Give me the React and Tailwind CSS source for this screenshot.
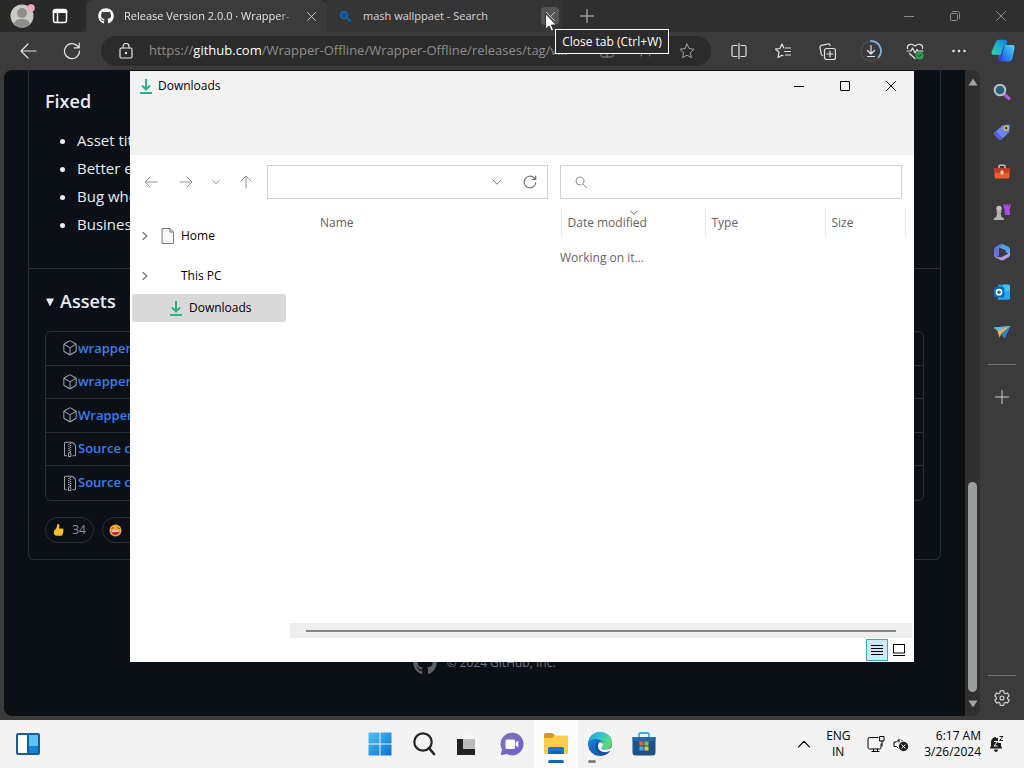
import { useState } from 'react';
import { GoPackage, GoFileZip } from 'react-icons/go';
import { FaGithub } from 'react-icons/fa';

const Icon = ({ size = 16, box = 16, width = 1, className = '', children }) => (
  <svg
    width={size}
    height={size}
    viewBox={`0 0 ${box} ${box}`}
    fill="none"
    stroke="currentColor"
    strokeWidth={width}
    strokeLinecap="round"
    strokeLinejoin="round"
    className={`shrink-0 ${className}`}
    aria-hidden="true"
  >
    {children}
  </svg>
);

const CloseIcon = ({ size = 10 }) => (
  <Icon size={size} box={10}><path d="M.5.5l9 9M9.5.5l-9 9" /></Icon>
);

const PlusIcon = () => (
  <Icon size={14} box={14}><path d="M7 .5v13M.5 7h13" /></Icon>
);

const DownloadsIcon = () => (
  <Icon size={16} width={2} className="text-[#2bb08a]">
    <path d="M8 1v10M4 7.500l4 4 4-4" strokeLinecap="butt" />
    <path d="M2 15h12" strokeLinecap="butt" />
  </Icon>
);

const Cursor = () => (
  <svg width="12" height="19" viewBox="0 0 12 19" className="absolute left-[4px] top-[6px] z-30" aria-hidden="true">
    <path d="M.6.8v15.400l3.500-3.300 2.300 5.300 2.300-1-2.300-5.200h4.900z" fill="#fff" stroke="#222" strokeWidth=".9" />
  </svg>
);

const TabStrip = () => {
  const [activeTab, setActiveTab] = useState('release');

  return (
    <div className="flex h-8 shrink-0 bg-[#2f2f2f]">
      <div className="flex w-[86px] shrink-0 items-center rounded-br-lg bg-[#292929]">
        <button aria-label="Profile" className="ml-[10px]">
          <svg width="26" height="26" viewBox="0 0 26 26">
            <circle cx="12" cy="13" r="11.500" fill="#c9c9c5" />
            <circle cx="12" cy="10" r="5" fill="#8d8d89" />
            <path d="M4 21c1-4 4-5 8-5s7 1 8 5a11.500 11.500 0 0 1-16 0z" fill="#8d8d89" />
            <circle cx="21" cy="5" r="3.800" fill="#f2a9b8" />
          </svg>
        </button>
        <button aria-label="Tab actions" className="ml-4 text-white">
          <Icon size={16} width={1.500}>
            <rect x="1.500" y="1.500" width="13" height="13" rx="2" />
            <path d="M2 3.500h12" strokeWidth="3" />
            <path d="M5.500 4v10" />
          </Icon>
        </button>
      </div>

      <div className="flex w-[241px] shrink-0 items-center rounded-t-lg bg-[#3b3b3b] pl-3">
        <FaGithub className="shrink-0 text-white" size={16} />
        <button
          onClick={() => setActiveTab('release')}
          aria-pressed={activeTab === 'release'}
          className="ml-[10px] w-[172px] shrink-0 whitespace-nowrap mask-r-from-90% text-left text-[11px] text-[#e4e4e4]"
        >
          Release Version 2.0.0 · Wrapper-
        </button>
        <button aria-label="Close tab" className="ml-[11px] text-[#d0d0d0]"><CloseIcon size={9} /></button>
      </div>

      <div className="flex w-[236px] shrink-0 items-center bg-[#353535] pl-3">
        <Icon size={12} box={12} width={2} className="text-[#1464ac]">
          <circle cx="5" cy="5" r="3.300" fill="#0d4f8c" />
          <path d="M7.500 7.500L11 11" />
        </Icon>
        <button
          onClick={() => setActiveTab('search')}
          aria-pressed={activeTab === 'search'}
          className="ml-3 flex-1 text-left text-[11px] text-[#d6d6d6]"
        >
          mash wallppaet - Search
        </button>
        <div className="relative mr-1 size-[18px]">
          <button aria-label="Close tab" className="flex size-[18px] items-center justify-center rounded bg-[#555] text-[#ccc]">
            <CloseIcon size={9} />
          </button>
          <Cursor />
          <div role="tooltip" className="absolute left-[14px] top-[22px] z-20 flex h-[25px] w-[114px] items-center justify-center whitespace-nowrap border border-white bg-[#2b2b2b] text-xs text-white">
            Close tab (Ctrl+W)
          </div>
        </div>
      </div>

      <button aria-label="New tab" className="ml-[17px] text-[#c8c8c8]"><PlusIcon /></button>

      <div className="ml-auto flex text-[#8e8e8e]">
        <button aria-label="Minimize" className="flex w-[46px] items-center justify-center">
          <Icon size={10} box={10}><path d="M0 5.500h10" /></Icon>
        </button>
        <button aria-label="Restore" className="flex w-[46px] items-center justify-center">
          <Icon size={10} box={10}>
            <rect x=".5" y="2.500" width="7" height="7" rx="1" />
            <path d="M2.500.5h5a2 2 0 0 1 2 2v5" />
          </Icon>
        </button>
        <button aria-label="Close" className="flex w-[46px] items-center justify-center"><CloseIcon /></button>
      </div>
    </div>
  );
};

const ToolButton = ({ label, children }) => (
  <button aria-label={label} className="flex h-[38px] w-11 shrink-0 items-center justify-center text-[#e4e4e4]">
    {children}
  </button>
);

const Star = () => <path d="M8 1l2.100 4.600 5 .6-3.700 3.400 1 5L8 12.200l-4.400 2.400 1-5L.9 6.200l5-.6z" />;

const Toolbar = () => (
  <div className="flex h-[38px] shrink-0 items-center bg-[#3b3b3b] pl-[6px]">
    <ToolButton label="Back">
      <Icon size={18} box={18} width={1.200}><path d="M17 9H2M9 2L2 9l7 7" /></Icon>
    </ToolButton>
    <ToolButton label="Refresh">
      <Icon size={18} box={18} width={1.200}><path d="M16.500 9a7.500 7.500 0 1 1-2.500-5.500l2 2M16.200 1v4.800h-4.800" /></Icon>
    </ToolButton>
    <div className="ml-[7px] flex h-[30px] min-w-0 flex-1 items-center rounded-full bg-[#2b2b2b] pl-[17px]">
      <Icon size={16} width={1.200} className="text-[#e4e4e4]">
        <rect x="2" y="5" width="12" height="10" rx="1.500" />
        <path d="M5 5V3.500a3 3 0 0 1 6 0V5" />
        <circle cx="8" cy="10" r=".6" fill="currentColor" />
      </Icon>
      <a
        href="https://github.com/Wrapper-Offline/Wrapper-Offline/releases"
        className="ml-[15px] flex-1 overflow-hidden whitespace-nowrap text-[13px] text-[#8f8f8f]"
      >
        https://<span className="text-white">github.com</span>/Wrapper-Offline/Wrapper-Offline/releases/tag/v...
      </a>
      <button aria-label="Install app" className="flex w-10 justify-center text-[#8c8c8c]">
        <Icon size={14} box={14}>
          <path d="M1 7h12v4.500a1.500 1.500 0 0 1-1.500 1.500h-9A1.500 1.500 0 0 1 1 11.500zM1 7V2.500A1.500 1.500 0 0 1 2.500 1H7v12M10.500 1v4M8.500 3h4" />
        </Icon>
      </button>
      <button aria-label="Read aloud" className="flex w-10 justify-center text-[#8c8c8c]">
        <Icon size={16}><path d="M2 13L6.500 2 11 13M3.500 9.500h6M12 3c1.300 1.500 1.300 3.500 0 5M14 1.500c2 2.500 2 5.500 0 8" /></Icon>
      </button>
      <button aria-label="Add to favorites" className="mr-1 flex w-10 justify-center text-[#a0a0a0]">
        <Icon size={16}><Star /></Icon>
      </button>
    </div>
    <div className="ml-[6px] flex">
      <ToolButton label="Split screen">
        <Icon size={16} width={1.200}>
          <path d="M6 2.500H2.500a1.500 1.500 0 0 0-1.500 1.500v8a1.500 1.500 0 0 0 1.500 1.500H6M10 2.500h3.500A1.500 1.500 0 0 1 15 4v8a1.500 1.500 0 0 1-1.500 1.500H10M8 .6v14.800" />
        </Icon>
      </ToolButton>
      <ToolButton label="Favorites">
        <Icon size={16} width={1.200}>
          <path d="M8.800 5L7 1 5 5.500l-4.500.6L4 9.300 3 14.500l4-2.300 1 .5M10.500 5H16M9.500 8.500H16M10.500 12H16" />
        </Icon>
      </ToolButton>
      <ToolButton label="Collections">
        <Icon size={17} box={17} width={1.200}>
          <rect x="5.500" y="5.500" width="11" height="11" rx="2" />
          <path d="M11 8v6M8 11h6M3.500 12.500A2 2 0 0 1 2.200 11L1 4.500a2 2 0 0 1 1.500-2.200L9 1a2 2 0 0 1 2.200 1.500" />
        </Icon>
      </ToolButton>
      <ToolButton label="Downloads">
        <Icon size={22} box={22} width={1.200}>
          <circle cx="11" cy="11" r="10" stroke="#4a4c4e" strokeWidth="1.500" />
          <path d="M11 1a10 10 0 0 1 7.500 16.500" stroke="#7fb0dd" strokeWidth="1.800" />
          <path d="M11 5.500v8M7.500 10.500L11 14l3.500-3.500M7.500 16.500h7" />
        </Icon>
      </ToolButton>
      <ToolButton label="Browser essentials">
        <Icon size={18} box={18} width={1.200}>
          <path d="M1.500 6.500C.5 3 5 .5 9 4c4-3.500 8.500-1 7.500 2.500M1 9h4l1.500-3 2.500 5 2-3.500 1 1.500h5M3.500 11.500L9 16.500" />
          <circle cx="13.500" cy="13.500" r="4" fill="#2f9e4b" stroke="none" />
          <path d="M11.800 13.500l1.200 1.200 2.200-2.300" stroke="#163b1f" strokeWidth="1" />
        </Icon>
      </ToolButton>
      <ToolButton label="Settings and more">
        <Icon size={14} box={14}>
          <g fill="currentColor" stroke="none">
            <circle cx="1.500" cy="7" r="1.300" /><circle cx="7" cy="7" r="1.300" /><circle cx="12.500" cy="7" r="1.300" />
          </g>
        </Icon>
      </ToolButton>
      <button aria-label="Copilot" className="flex w-[43px] items-center justify-center">
        <svg width="24" height="24" viewBox="0 0 24 24">
          <defs>
            <linearGradient id="copA" x1="0" y1="1" x2="1" y2="0">
              <stop offset="0" stopColor="#35d39a" /><stop offset=".5" stopColor="#18b3cf" /><stop offset="1" stopColor="#1479e0" />
            </linearGradient>
            <linearGradient id="copB" x1="0" y1="1" x2="1" y2="0">
              <stop offset="0" stopColor="#2e46e6" /><stop offset=".5" stopColor="#2c95f5" /><stop offset="1" stopColor="#62d3fa" />
            </linearGradient>
          </defs>
          <path d="M5 2.500Q6 .8 8 .8h6.500q2 0 1.500 2.500l-2.500 9.500q-.8 3-3.500 3H2.500Q0 15.800.7 12.500z" fill="url(#copA)" />
          <path d="M14 6h7.500q2.500 0 2 3l-2 10.500q-.8 3-3.500 3h-7q-2.500 0-1.800-3l1.800-10q.8-3.500 3-3.500z" fill="url(#copB)" />
          <path d="M13.200 6.500L10.300 18" stroke="#2b3440" strokeWidth=".8" />
          <path d="M7 16h4.500l-1.300 6.500Q7.500 22 7 16z" fill="#3a42e0" />
        </svg>
      </button>
    </div>
  </div>
);

const fixes = ['Asset titles', 'Better errors', 'Bug where', 'Businesses'];

const assets = [
  { name: 'wrapper-offline', icon: GoPackage },
  { name: 'wrapper-offline', icon: GoPackage },
  { name: 'Wrapper-Offline', icon: GoPackage },
  { name: 'Source code', icon: GoFileZip },
  { name: 'Source code', icon: GoFileZip },
];

const ReleasePage = () => (
  <main className="min-w-0 flex-1 overflow-hidden rounded-l-lg bg-[#0b0f16] text-[#e6edf3]">
    <div className="mx-6 rounded-b-md border border-t-0 border-[#2a3037]">
      <div className="px-4 pt-4 pb-8">
        <h3 className="text-lg leading-[30px] font-semibold">Fixed</h3>
        <ul className="mt-3 list-disc space-y-1 pl-8 text-[15px] leading-6">
          {fixes.map(item => <li key={item}>{item}</li>)}
        </ul>
      </div>
      <div className="border-t border-[#2a3037] px-4 pt-[17px] pb-4">
        <h3 className="flex items-center gap-[5px] text-lg leading-[30px] font-semibold">
          <svg width="10" height="12" viewBox="0 0 10 12" aria-hidden="true"><path d="M1 3.500h8L5 11.500z" fill="currentColor" /></svg>
          Assets
        </h3>
        <ul className="mt-[15px] grid h-[170px] auto-rows-fr divide-y divide-[#2a3037] rounded-md border border-[#2a3037]">
          {assets.map(({ name, icon: AssetIcon }, i) => (
            <li key={i} className="flex items-center pl-4 text-[13px] font-semibold">
              <AssetIcon size={16} className="shrink-0 text-[#9aa3ad]" />
              <a href="#" className="text-[#3b7eea]">{name}</a>
            </li>
          ))}
        </ul>
        <div className="mt-4 flex gap-2 text-xs text-[#8b949e]">
          <button aria-label="Thumbs up, 34" className="flex h-[26px] w-[49px] items-center justify-center gap-2 rounded-full border border-[#2a3037]">
            <svg width="11" height="14" viewBox="0 0 11 14" aria-hidden="true">
              <path d="M4.500 1.200c1-.8 2 .2 1.900 1.500L6 5.500h3.300c1.400 0 1.500 1.500.8 2 .7.600.5 1.600-.2 1.900.4.700.2 1.500-.5 1.800.1 1-.5 1.600-1.400 1.600H4C2 12.800.8 11.500.8 9.500.8 7 2.800 6.300 3.600 4.500c.4-1 .3-2.300.9-3.300z" fill="#fbc02e" />
            </svg>
            34
          </button>
          <button aria-label="Laugh" className="flex h-[26px] w-[49px] items-center rounded-full border border-[#2a3037] pl-[6px]">
            <svg width="13" height="13" viewBox="0 0 13 13" aria-hidden="true">
              <circle cx="6.500" cy="6.500" r="6" fill="#f7a53c" />
              <path d="M2.500 4.500l2-.8M8.500 3.700l2 .8" stroke="#5c3514" />
              <path d="M2.500 6.500h8c0 3-1.800 4.500-4 4.500s-4-1.500-4-4.500z" fill="#c2263c" />
              <path d="M3 6.500h7v1.200H3z" fill="#fff" />
            </svg>
          </button>
        </div>
      </div>
    </div>
    <footer className="mt-[91px] flex items-center justify-center gap-[9px] text-xs text-[#6e7681]">
      <FaGithub size={24} className="text-[#59616b]" />
      © 2024 GitHub, Inc.
    </footer>
  </main>
);

const PageScrollbar = () => (
  <div className="flex w-[15px] shrink-0 flex-col items-center rounded-r-lg bg-[#2f302f] py-2 text-[#a3a3a3]">
    <svg width="10" height="8" viewBox="0 0 10 8" aria-hidden="true"><path d="M5 .5L9.500 7.500h-9z" fill="currentColor" /></svg>
    <div className="flex w-full flex-1 flex-col items-center pt-1 pb-2">
      <div className="flex-[393]" />
      <div className="w-[9px] flex-[210] rounded-full bg-[#9b9e9c]" />
    </div>
    <svg width="10" height="8" viewBox="0 0 10 8" aria-hidden="true"><path d="M5 7.500L9.500.5h-9z" fill="currentColor" /></svg>
  </div>
);

const SideButton = ({ label, children }) => (
  <button aria-label={label} className="flex h-10 w-full items-center justify-center">
    <svg width="18" height="18" viewBox="0 0 18 18">{children}</svg>
  </button>
);

const EdgeSidebar = () => (
  <aside className="flex w-11 shrink-0 flex-col items-center pt-[2px] text-[#cfcfcf]">
    <SideButton label="Search">
      <path d="M10.500 10.500l5.500 5" stroke="#b35be0" strokeWidth="3.200" strokeLinecap="round" />
      <circle cx="7" cy="7" r="5.300" fill="#25617c" stroke="#b9c1c4" strokeWidth="2" />
    </SideButton>
    <SideButton label="Shopping">
      <path d="M9.500 2.500L15.500 1.500q1.500 0 1.500 1.500l-.8 6L8.500 16.500q-1.200 1-2.400 0L1.500 12q-1-1.200 0-2.400z" fill="#6f86f2" />
      <path d="M1.500 12q-1-1.200 0-2.400L3 8.500l7 6.500-1.500 1.500q-1.200 1-2.400 0z" fill="#5a5fd8" />
      <circle cx="13.200" cy="5.200" r="2" fill="#32406b" stroke="#e6c53c" strokeWidth="1.300" />
    </SideButton>
    <SideButton label="Tools">
      <path d="M6 5V3.200q0-1 1-1h4q1 0 1 1V5" fill="none" stroke="#b9b9b9" strokeWidth="1.600" />
      <path d="M.8 6q0-1 1-1h14.400q1 0 1 1v3.500H.8z" fill="#c53a26" />
      <path d="M1.500 9.500h15V14q0 1.500-1.500 1.500H3q-1.500 0-1.500-1.500z" fill="#ee5a33" />
      <rect x="7.500" y="7.500" width="3" height="4" rx="1" fill="#f3c9a5" />
    </SideButton>
    <SideButton label="Games">
      <path d="M10.500 1h1.500v1.500h1.200V1h1.600v1.500H16V1h1.500v3.500l-1 1L17 12h-5l-.5-6.500-1-1z" fill="#a94be6" />
      <circle cx="6" cy="5.500" r="2.700" fill="#c1c1be" />
      <path d="M3.500 7.800h5v1.500l-.8.5.8 4 2.500 1.700V17H.8v-1.500l2.500-1.700.9-4-.7-.5z" fill="#b0b0ad" />
    </SideButton>
    <SideButton label="Microsoft 365">
      <path d="M9.500 1l6 3q1.500.8 1.500 2.500v5L12.500 9V7L6 4.500z" fill="#4da6f3" />
      <path d="M9.500 1Q7 .5 5.500 2L2.500 4Q1 5 1 7v6q2.500 1 5-.5V6q0-2 2-3z" fill="#6672dd" />
      <path d="M1 12q.3 1.500 1.500 2.300l5 2.700q1.500.8 3 0L16 14q1-.8 1-2.500V9.500L9.500 13.800Q5 15.500 1 12z" fill="#b69bea" />
    </SideButton>
    <SideButton label="Outlook">
      <path d="M5 1.500h10q2 0 2 2V15q0 1.500-1.500 1.500H5z" fill="#1d8fe0" />
      <path d="M10 1.500h5q2 0 2 2V8l-7 2z" fill="#47bdf2" />
      <path d="M5 10l12-2v7q0 1.500-1.500 1.500H5z" fill="#27a9ee" />
      <rect x=".8" y="4" width="10.500" height="10.500" rx="1.500" fill="#0768b8" />
      <circle cx="6" cy="9.200" r="2.600" fill="none" stroke="#fff" strokeWidth="1.600" />
    </SideButton>
    <SideButton label="Drop">
      <path d="M.5 4.500L17.500 3 11.500 15.500 8 10.500z" fill="#3c9be8" />
      <path d="M.5 4.500L17.500 3 5.500 8.500z" fill="#62b6ef" />
      <path d="M4.500 8.300L17.500 3 8.500 10.500 6.500 14.500z" fill="#e8b542" />
      <path d="M8.500 10.500L17.500 3 11.500 15.500z" fill="#2a80cf" />
    </SideButton>
    <div className="mt-3 h-px w-7 bg-[#707070]" />
    <button aria-label="Customize sidebar" className="mt-[25px]"><PlusIcon /></button>
    <div className="mt-auto h-px w-7 bg-[#707070]" />
    <button aria-label="Settings" className="mt-[13px] mb-[13px]">
      <Icon size={18} box={24} width={1.600}>
        <path d="M9.700 2.500a10 10 0 0 1 4.600 0l.5 2.700 1.800 1 2.600-.9a10 10 0 0 1 2.300 4L19.400 11.200v1.700l2.100 1.800a10 10 0 0 1-2.300 4l-2.600-.9-1.800 1-.5 2.700a10 10 0 0 1-4.600 0l-.5-2.700-1.800-1-2.600.9a10 10 0 0 1-2.300-4l2.100-1.800v-1.700L2.500 9.300a10 10 0 0 1 2.300-4l2.600.9 1.800-1z" />
        <circle cx="12" cy="12" r="2.600" />
      </Icon>
    </button>
  </aside>
);

const ExplorerWindow = () => {
  const [path, setPath] = useState('');
  const [query, setQuery] = useState('');

  return (
    <section className="absolute top-[71px] right-[110px] bottom-[58px] left-[130px] z-10 flex flex-col bg-white text-xs text-black">
      <header className="h-[84px] shrink-0 bg-[#f2f2f2]">
        <div className="flex h-[29px] items-center pl-2">
          <DownloadsIcon />
          <h1 className="ml-1">Downloads</h1>
          <div className="ml-auto flex">
            <button aria-label="Minimize" className="flex h-[29px] w-[46px] items-center justify-center">
              <Icon size={10} box={10}><path d="M0 5.500h10" /></Icon>
            </button>
            <button aria-label="Maximize" className="flex h-[29px] w-[46px] items-center justify-center">
              <Icon size={10} box={10}><rect x=".5" y=".5" width="9" height="9" rx=".5" /></Icon>
            </button>
            <button aria-label="Close" className="flex h-[29px] w-[46px] items-center justify-center"><CloseIcon /></button>
          </div>
        </div>
      </header>

      <nav className="flex shrink-0 items-center pt-[10px] pr-3 pl-[14px] text-[#8f8f8f]">
        <button aria-label="Back"><Icon size={14} box={14}><path d="M13 7H1.500M6 2L1 7l5 5" /></Icon></button>
        <button aria-label="Forward" className="ml-[21px]"><Icon size={14} box={14}><path d="M1 7h11.500M8 2l5 5-5 5" /></Icon></button>
        <button aria-label="Recent locations" className="ml-[19px]"><Icon size={8} box={8}><path d="M.7 2.500L4 5.800l3.300-3.300" /></Icon></button>
        <button aria-label="Up" className="ml-[19px]"><Icon size={14} box={14}><path d="M7 13V1.500M2 6l5-5 5 5" /></Icon></button>
        <div className="ml-[14px] flex h-[34px] w-[281px] items-center border border-[#d0d0d0]">
          <input aria-label="Address" value={path} onChange={e => setPath(e.target.value)} className="min-w-0 flex-1 px-2 outline-none" />
          <button aria-label="Previous locations" className="text-[#707070]"><Icon size={10} box={10}><path d="M.8 3L5 7.200 9.200 3" /></Icon></button>
          <button aria-label="Refresh" className="mr-[10px] ml-[21px] text-[#707070]">
            <Icon size={14} box={14} width={1.200}><path d="M12.800 7.500A5.800 5.800 0 1 1 11 2.800l1.500 1.400M12.700 1v3.500H9.200" /></Icon>
          </button>
        </div>
        <label className="ml-3 flex h-[34px] flex-1 items-center border border-[#d0d0d0] pl-[14px]">
          <Icon size={12} box={12}><circle cx="5" cy="5" r="4" /><path d="M8 8l3.500 3.500" /></Icon>
          <input aria-label="Search Downloads" value={query} onChange={e => setQuery(e.target.value)} className="min-w-0 flex-1 px-2 outline-none" />
        </label>
      </nav>

      <div className="flex min-h-0 flex-1">
        <ul className="w-40 shrink-0 pt-[23px] pr-1 pl-[2px]">
          <li className="flex h-7 items-center pl-[9px]">
            <Icon size={8} box={8} width={1.200} className="text-[#777]"><path d="M2 .5L5.800 4 2 7.500" /></Icon>
            <Icon size={16} className="ml-[11px] text-[#777]">
              <path d="M2.500.5h7.500l3.500 3.500v11.500h-11zM10 .5V4h3.500" fill="#fafafa" />
            </Icon>
            <a href="#" className="ml-[5px]">Home</a>
          </li>
          <li className="mt-3 flex h-7 items-center pl-[9px]">
            <Icon size={8} box={8} width={1.200} className="text-[#777]"><path d="M2 .5L5.800 4 2 7.500" /></Icon>
            <a href="#" className="ml-8">This PC</a>
          </li>
          <li className="mt-1 flex h-7 items-center rounded-xs bg-[#d9d9d9] pl-9">
            <DownloadsIcon />
            <a href="#" className="ml-[5px]">Downloads</a>
          </li>
        </ul>

        <div className="flex min-w-0 flex-1 flex-col">
          <div className="flex-1 pt-[10px]">
            <table className="w-full table-fixed text-left text-[#646464]">
              <thead>
                <tr className="h-7 divide-x divide-[#e6e6e6]">
                  <th className="pl-[30px] font-normal">Name</th>
                  <th className="relative w-36 pl-[6px] font-normal">
                    <Icon size={8} box={8} className="absolute left-[68px] top-0"><path d="M.7 2L4 5.300 7.300 2" /></Icon>
                    Date modified
                  </th>
                  <th className="w-[120px] pl-[6px] font-normal">Type</th>
                  <th className="w-20 pl-[6px] font-normal">Size</th>
                  <th className="w-[9px]" />
                </tr>
              </thead>
              <tbody>
                <tr className="h-[42px]">
                  <td colSpan={5} className="text-center">Working on it...</td>
                </tr>
              </tbody>
            </table>
          </div>
          <div className="mr-[2px] flex h-[15px] items-center bg-[#eeeeee] px-4">
            <div className="h-[2px] flex-1 bg-[#858585]" />
          </div>
        </div>
      </div>

      <div className="flex h-6 shrink-0 items-center justify-end pr-[9px]">
        <button aria-label="Details view" className="flex size-[22px] items-center justify-center border border-[#4a9cc4] bg-[#cfe8f5]">
          <Icon size={12} box={12} className="text-black"><path d="M0 1.500h12M0 4.500h12M0 7.500h12M0 10.500h12" /></Icon>
        </button>
        <button aria-label="Large icons view" className="ml-[5px]">
          <Icon size={12} box={12}><rect x=".5" y=".5" width="11" height="8.500" strokeLinejoin="miter" /><path d="M0 11.500h12" /></Icon>
        </button>
      </div>
    </section>
  );
};

const TaskButton = ({ label, children }) => (
  <button aria-label={label} className="flex h-full w-11 items-center justify-center">
    <svg width="24" height="24" viewBox="0 0 24 24">{children}</svg>
  </button>
);

const Taskbar = () => (
  <footer className="grid h-12 shrink-0 grid-cols-[1fr_auto_1fr] items-center bg-[#f3f3f3] text-black">
    <button aria-label="Widgets" className="ml-4 w-6">
      <svg width="24" height="24" viewBox="0 0 24 24">
        <rect x="1" y="2" width="22" height="20" rx="1" fill="#fff" stroke="#1d5c92" strokeWidth="2" />
        <rect x="13" y="3" width="9" height="18" fill="#5fc3f5" />
        <path d="M13 14h9v7h-9z" fill="#1683d8" />
        <path d="M12 2v20" stroke="#1d5c92" strokeWidth="2" />
      </svg>
    </button>
    <div className="flex h-12">
      <TaskButton label="Start">
        <defs>
          <linearGradient id="win" x1="0" y1="0" x2="1" y2="1"><stop offset="0" stopColor="#4cc5f5" /><stop offset="1" stopColor="#0a6fce" /></linearGradient>
        </defs>
        <path d="M.5.5h11v11H.5zM12.500.5h11v11h-11zM.5 12.500h11v11H.5zM12.500 12.500h11v11h-11z" fill="url(#win)" />
      </TaskButton>
      <TaskButton label="Search">
        <circle cx="11" cy="10" r="8.700" fill="none" stroke="#242424" strokeWidth="2.200" />
        <path d="M17 16l5 6" stroke="#242424" strokeWidth="2.600" strokeLinecap="round" />
      </TaskButton>
      <TaskButton label="Task view">
        <path d="M1 7h18v16H1z" fill="#222" />
        <path d="M7 3h16v14H7z" fill="#f7f7f7" />
        <path d="M7 7h12v10H7z" fill="#bcbcbc" />
      </TaskButton>
      <TaskButton label="Chat">
        <path d="M12 .8A11.300 11.300 0 1 1 6.800 22L.8 23.200 2 17.500A11.300 11.300 0 0 1 12 .8z" fill="#7265c5" />
        <path d="M12 .8a11.300 11.300 0 0 1 9 5L3 20 .8 23.200 2 17.500A11.300 11.300 0 0 1 12 .8z" fill="#8775bd" opacity=".5" />
        <rect x="5.500" y="7.500" width="9.500" height="9.500" rx="1.500" fill="#fff" />
        <path d="M15.500 10.800l2.800-2.300v7l-2.800-2.300z" fill="#fff" />
      </TaskButton>
      <div className="relative h-full bg-[#fcfcfc]">
        <TaskButton label="File Explorer">
          <path d="M0 2.500Q0 1 1.500 1h7L11 3.500 9 7H0z" fill="#d59a1c" />
          <path d="M0 6h8l3-2.500h11.500Q24 3.500 24 5v15.500q0 1.500-1.500 1.500h-21Q0 22 0 20.500z" fill="#fbcd4b" />
          <path d="M4 22v-5.500Q4 15 5.500 15h13q1.500 0 1.500 1.500V22z" fill="#1976c9" />
          <path d="M7 22v-2q0-1 1-1h8q1 0 1 1v2z" fill="#135fae" />
        </TaskButton>
        <div className="absolute bottom-[5px] left-[14px] h-[3px] w-4 rounded-full bg-[#0f69bd]" />
      </div>
      <div className="relative h-full">
        <TaskButton label="Microsoft Edge">
          <defs>
            <linearGradient id="edgeTop" x1="0" y1="0" x2="1" y2=".4"><stop offset="0" stopColor="#22a2e4" /><stop offset=".5" stopColor="#2fc5cf" /><stop offset="1" stopColor="#5fdb72" /></linearGradient>
            <linearGradient id="edgeLow" x1="0" y1="0" x2="1" y2="1"><stop offset="0" stopColor="#1a8bdd" /><stop offset="1" stopColor="#12479a" /></linearGradient>
          </defs>
          <circle cx="12" cy="12" r="12" fill="url(#edgeLow)" />
          <path d="M.2 10.500C1.500 4 6.500 0 12 0c7 0 12 5 12 10.700 0 4-3 6.500-6.500 6.500-2.500 0-4-.8-3.800-1.800 1.300-1 1.600-2.300 1.300-3.600C14.300 8.500 11 7 8 7 4.500 7 1.500 8.500.2 10.500z" fill="url(#edgeTop)" />
          <path d="M9.500 14.500c.5 4 4 6.200 7.500 6.200 2 0 3.700-.7 5-1.500.5-.3.8 0 .5.500-.5.800-1 1.300-1.800 2L24 24v-9.500c-1.300 1.800-3.700 3-6.500 3-3 0-4.500-1-3.800-2.100 1.400-1 1.500-2.600 1-3.900-1.500-2.200-5.500-1.200-5.200 3z" fill="#f3f3f3" />
          <path d="M7.200 13.500c-.3 5 3.300 9 8.300 9.500 3-.5 5.500-2 7-4.200-5.500 3-12 .8-12.500-3.800-.2-2 .3-3.300 1.200-4-2.200.1-3.800 1.200-4 2.500z" fill="#1552a5" />
        </TaskButton>
        <div className="absolute bottom-[5px] left-[10px] h-[3px] w-2 rounded-full bg-[#858585]" />
      </div>
      <TaskButton label="Microsoft Store">
        <path d="M7 5V2.500Q7 1 8.500 1h7Q17 1 17 2.500V5" fill="none" stroke="#35b4e8" strokeWidth="1.800" />
        <path d="M.5 5h23v15.500q0 3-3 3h-17q-3 0-3-3z" fill="#1d5288" />
        <path d="M.5 5h23v4H.5z" fill="#256ba6" />
        <path d="M7.500 9.500h4v4h-4z" fill="#ee6338" />
        <path d="M12.500 9.500h4v4h-4z" fill="#87c440" />
        <path d="M7.500 14.500h4v4h-4z" fill="#39b3ed" />
        <path d="M12.500 14.500h4v4h-4z" fill="#f8c634" />
      </TaskButton>
    </div>
    <div className="flex items-center justify-end pr-5 text-xs leading-4">
      <button aria-label="Show hidden icons"><Icon size={12} box={12} width={1.200}><path d="M.6 8.800L6 3.400l5.400 5.400" /></Icon></button>
      <button className="ml-4 w-6 text-center">ENG IN</button>
      <button aria-label="Network" className="ml-[17px]">
        <Icon size={18} box={18}>
          <path d="M11 2.500H2.500a1.500 1.500 0 0 0-1.500 1.500v8.500A1.500 1.500 0 0 0 2.500 14h10a1.500 1.500 0 0 0 1.500-1.500V9M5 16.500h7M6.500 14v2.500M10.500 14v2.500M13 1.500h4v4.500h-4zM15 6v5" />
        </Icon>
      </button>
      <button aria-label="Volume muted" className="ml-2">
        <Icon size={16}>
          <path d="M6 3.500L3.500 6H1v4.500h2.500L5 12M6 3.500V6M8.500 4l1 1" />
          <circle cx="10.500" cy="10.500" r="4.700" fill="#222" stroke="none" />
          <path d="M8.900 8.900l3.200 3.200M12.100 8.900l-3.200 3.200" stroke="#fff" />
        </Icon>
      </button>
      <button className="ml-[15px] whitespace-nowrap text-right">6:17 AM<br />3/26/2024</button>
      <button aria-label="Notifications" className="ml-2">
        <svg width="15" height="18" viewBox="0 0 15 18" aria-hidden="true">
          <path d="M7 2a5 5 0 0 0-5 5v4L.8 13.500h12.400L12 11V8H9V3H7zM4.800 14.500h4.400Q8.500 17 7 17t-2.200-2.500z" fill="#1c1c1c" />
          <path d="M5 6.500h3.500L5 11h3.500" fill="none" stroke="#fff" />
          <path d="M10.500 1.500h3.500l-3.500 4H14" fill="none" stroke="#1c1c1c" />
        </svg>
      </button>
    </div>
  </footer>
);

const App = () => (
  <div className="flex h-screen flex-col overflow-hidden bg-[#3b3b3b] font-['Open_Sans','Noto_Sans',sans-serif]">
    <div className="relative flex min-h-0 flex-1 flex-col">
      <TabStrip />
      <Toolbar />
      <div className="flex min-h-0 flex-1">
        <div className="mb-1 ml-1 flex min-w-0 flex-1">
          <ReleasePage />
          <PageScrollbar />
        </div>
        <EdgeSidebar />
      </div>
      <ExplorerWindow />
    </div>
    <Taskbar />
  </div>
);

export default App;
